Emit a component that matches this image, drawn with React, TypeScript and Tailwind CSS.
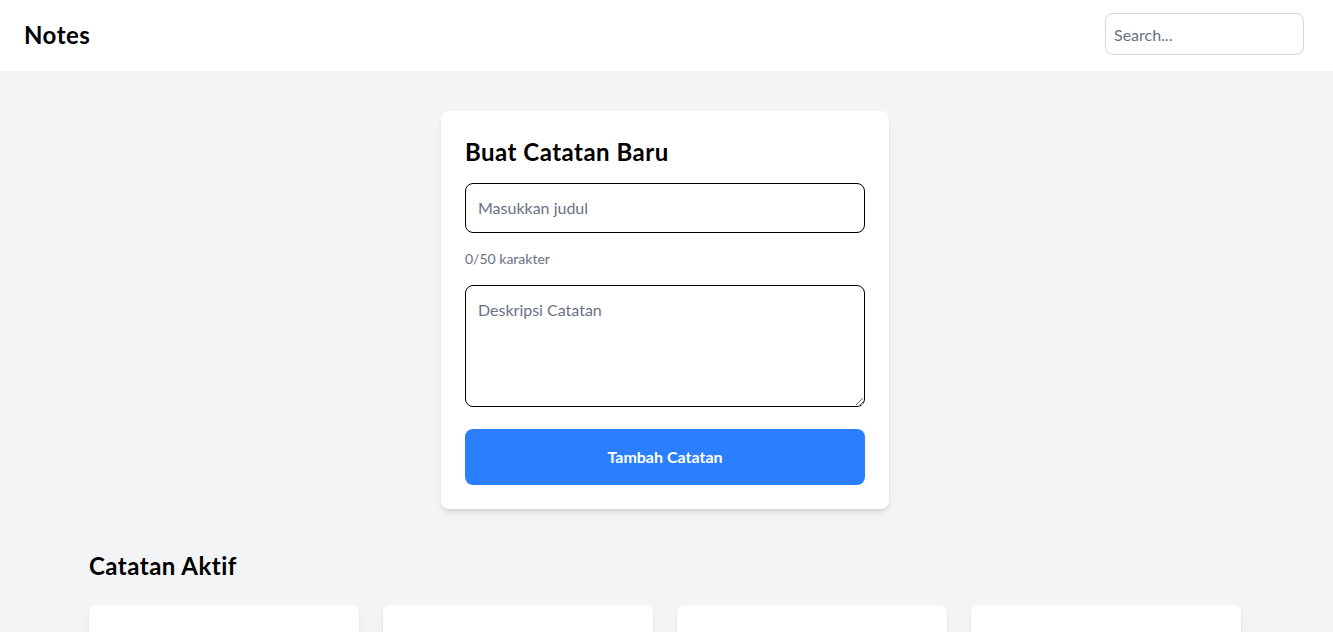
export default function App() {
  return (
    <div className="min-h-screen bg-gray-100 font-['Lato',sans-serif] text-black [font-variant-ligatures:none]">
      <header className="flex h-[71px] items-start justify-between bg-white pt-[13px] pl-6 pr-[29px]">
        <div className="mt-[6px] text-2xl font-bold tracking-[0.02em]">Notes</div>
        <input
          type="text"
          placeholder="Search..."
          className="h-[42px] w-[199px] rounded-lg border border-gray-300 px-2 text-base outline-none placeholder:text-gray-500"
        />
      </header>

      <main className="pb-10 pr-[3px]">
        <div className="mx-auto mt-10 w-[448px] rounded-lg bg-white p-6 shadow-md">
          <h2 className="mb-4 pt-px text-2xl leading-[31px] font-bold tracking-[0.02em]">Buat Catatan Baru</h2>
          <input
            type="text"
            placeholder="Masukkan judul"
            className="block w-full rounded-lg border border-black px-3 py-3 text-base outline-none placeholder:text-gray-500"
          />
          <div className="mt-4 text-sm text-gray-500">0/50 karakter</div>
          <textarea
            rows={4}
            placeholder="Deskripsi Catatan"
            className="mt-4 block w-full rounded-lg border border-black px-3 py-3 text-base outline-none placeholder:text-gray-500"
          />
          <button className="mt-[22px] w-full rounded-lg bg-blue-500 py-4 text-base font-bold text-white">
            Tambah Catatan
          </button>
        </div>

        <section className="mx-auto mt-[41px] max-w-6xl">
          <h2 className="mb-[23px] text-2xl font-bold tracking-[0.02em]">Catatan Aktif</h2>
          <div className="grid grid-cols-4 gap-6">
            <div className="h-40 rounded-lg bg-white shadow-md"></div>
            <div className="h-40 rounded-lg bg-white shadow-md"></div>
            <div className="h-40 rounded-lg bg-white shadow-md"></div>
            <div className="h-40 rounded-lg bg-white shadow-md"></div>
          </div>
        </section>
      </main>
    </div>
  );
}
